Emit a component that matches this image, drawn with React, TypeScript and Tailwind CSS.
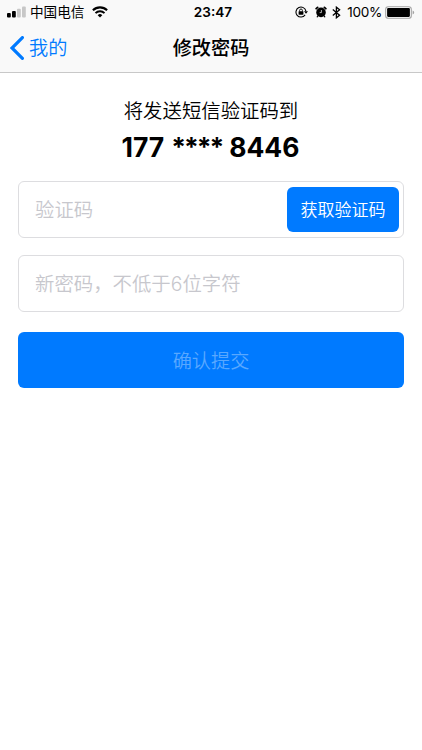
import { useState } from 'react';

const PHONE = ['177', '****', '8446'];

function SignalIcon() {
  return (
    <svg width="19" height="12" viewBox="0 0 19 12">
      <rect x="0" y="7" width="3.8" height="4.4" rx="1" fill="#000" />
      <rect x="5" y="5" width="3.8" height="6.4" rx="1" fill="#000" />
      <rect x="10" y="2.7" width="3.8" height="8.7" rx="1" fill="#c7c7c7" />
      <rect x="15" y="0.5" width="3.8" height="10.9" rx="1" fill="#c7c7c7" />
    </svg>
  );
}

function WifiIcon() {
  return (
    <svg width="16" height="12" viewBox="0 0 16 12" fill="none" stroke="#000">
      <path d="M0.9 4.3a10.2 10.2 0 0 1 14.2 0" strokeWidth="2.1" />
      <path d="M3.5 7.1a6.4 6.4 0 0 1 9 0" strokeWidth="2" />
      <path d="M8 11.4 5.7 9.2a3.3 3.3 0 0 1 4.6 0z" fill="#000" stroke="none" />
    </svg>
  );
}

function RotationLockIcon() {
  return (
    <svg width="13" height="12" viewBox="0 0 13 12" fill="none">
      <path d="M10.1 8.9A5 5 0 1 1 10.9 5.2" stroke="#000" strokeWidth="1.1" />
      <path d="M9 5.2h4L11 7.8z" fill="#000" />
      <rect x="3.6" y="5.2" width="4.8" height="3.5" rx="0.4" fill="#000" />
      <path d="M4.6 5.5V4.4a1.4 1.4 0 0 1 2.8 0v1.1" stroke="#000" strokeWidth="0.9" />
    </svg>
  );
}

function AlarmIcon() {
  return (
    <svg width="12" height="12" viewBox="0 0 12 12" fill="none">
      <circle cx="6" cy="6.4" r="4.8" fill="#000" />
      <path d="M1.2 2.7 2.6 1.4M10.8 2.7 9.4 1.4" stroke="#000" strokeWidth="1.8" strokeLinecap="round" />
      <path d="m2.9 10-.7.9M9.1 10l.7.9" stroke="#000" strokeWidth="1.2" strokeLinecap="round" />
      <path d="M6.4 4v2.6H4.7" stroke="#f9f9f9" strokeWidth="0.7" />
    </svg>
  );
}

function BluetoothIcon() {
  return (
    <svg width="9" height="13" viewBox="0 0 9 13" fill="none" stroke="#000" strokeWidth="1.3">
      <path d="M0.8 3.5 7.6 9.2 4.4 11.8V1.2l3.2 2.6L0.8 9.5" />
    </svg>
  );
}

function BatteryIcon() {
  return (
    <svg width="30" height="13" viewBox="0 0 30 13">
      <rect x="0.7" y="0.7" width="25.6" height="11.6" rx="2.6" fill="#fff" stroke="#a3a3a3" strokeWidth="1.1" />
      <rect x="2.1" y="2.1" width="22.8" height="8.8" rx="1.1" fill="#000" />
      <path d="M27.6 4.4a2.2 2.2 0 0 1 0 4.2z" fill="#a3a3a3" />
    </svg>
  );
}

function StatusBar() {
  return (
    <div className="grid h-6 grid-cols-[1fr_auto_1fr] items-center px-[7px] text-black">
      <div className="flex items-center">
        <SignalIcon />
        <span className="ml-1 text-[13.6px] leading-6">中国电信</span>
        <span className="ml-2">
          <WifiIcon />
        </span>
      </div>
      <span className="pl-1 text-[13.6px] leading-6 font-semibold">23:47</span>
      <div className="flex items-center justify-end">
        <RotationLockIcon />
        <span className="ml-[7px]">
          <AlarmIcon />
        </span>
        <span className="ml-[5px]">
          <BluetoothIcon />
        </span>
        <span className="ml-[6px] text-[13.6px] leading-6 tracking-[-0.3px]">100%</span>
        <span className="ml-[3px]">
          <BatteryIcon />
        </span>
      </div>
    </div>
  );
}

function NavBar() {
  return (
    <div className="grid h-12 grid-cols-[1fr_auto_1fr] items-center px-[10px]">
      <button className="flex items-center text-[#007aff]">
        <svg width="14" height="24" viewBox="0 0 14 24" fill="none">
          <path d="M12.4 1.6 2 12l10.4 10.4" stroke="#007aff" strokeWidth="3.2" strokeLinecap="round" />
        </svg>
        <span className="ml-[5px] text-[19.2px] leading-7 font-[350]">我的</span>
      </button>
      <h1 className="text-[19.2px] leading-7 font-medium text-black">修改密码</h1>
    </div>
  );
}

export default function App() {
  const [code, setCode] = useState('');
  const [password, setPassword] = useState('');

  return (
    <div className="h-[750px] w-[422px] overflow-hidden bg-white font-['Inter','Noto_Sans_CJK_SC',sans-serif]">
      <header className="h-[73px] border-b border-[#c8c8c8] bg-[#f9f9f9]">
        <StatusBar />
        <NavBar />
      </header>

      <main className="px-[18px] pt-6">
        <p className="text-center text-[19.4px] leading-7 font-[350] text-black">将发送短信验证码到</p>
        <p className="mt-1 flex justify-center gap-[7px] pr-px text-[26.5px] leading-9 font-bold text-black">
          <span>{PHONE[0]}</span>
          <span className="tracking-[-2.1px]">{PHONE[1]}</span>
          <span>{PHONE[2]}</span>
        </p>

        <div className="mt-4 flex h-[57px] w-[386px] items-center rounded-md border border-[#dddde0] pr-1 pl-4">
          <input
            className="min-w-0 flex-1 pt-[2px] text-[19.4px] font-[350] text-black outline-none placeholder:text-[#c7c7cd]"
            placeholder="验证码"
            value={code}
            onChange={(e) => setCode(e.target.value)}
          />
          <button className="h-[45px] w-[112px] rounded-md bg-[#007aff] pt-[3px] text-[17px] font-[350] text-white">
            获取验证码
          </button>
        </div>

        <div className="mt-[17px] flex h-[57px] w-[386px] items-center rounded-md border border-[#dddde0] px-4">
          <input
            className="min-w-0 flex-1 pt-[2px] text-[19.4px] font-[350] text-black outline-none placeholder:text-[#c7c7cd]"
            placeholder="新密码，不低于6位字符"
            value={password}
            onChange={(e) => setPassword(e.target.value)}
          />
        </div>

        <button className="mt-5 h-14 w-[386px] rounded-md bg-[#007aff] pt-[2px] text-[19.2px] font-[350] text-[#59a8ff]">
          确认提交
        </button>
      </main>
    </div>
  );
}
